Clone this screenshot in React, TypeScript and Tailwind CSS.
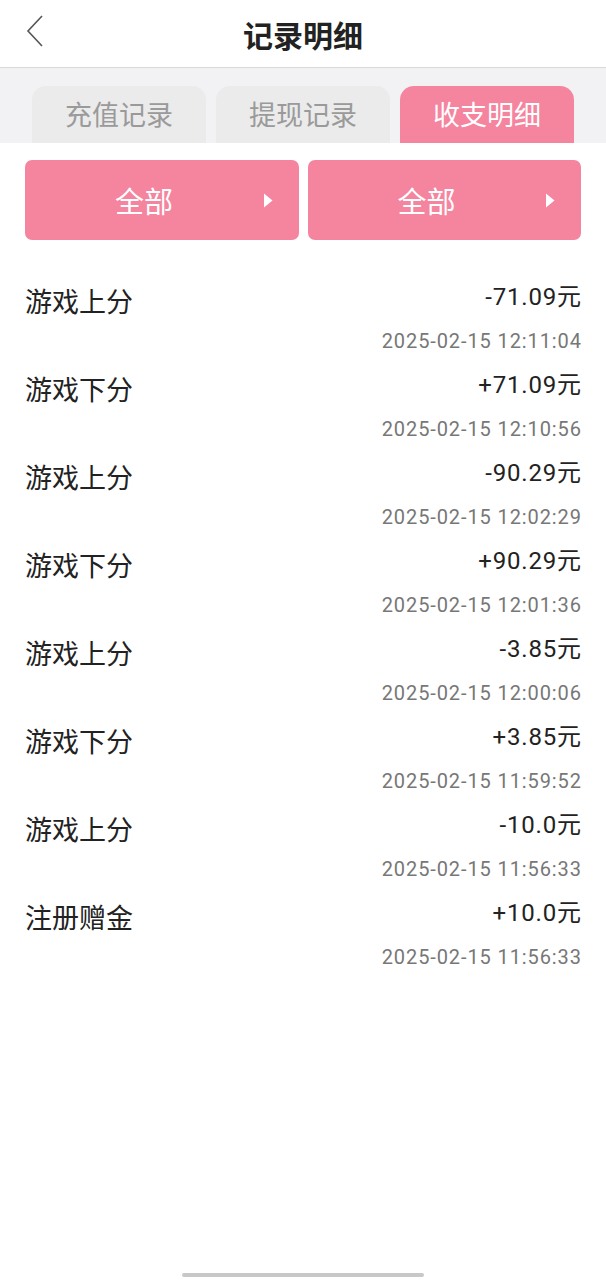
import React from "react";

const rows = [
  { t: "游戏上分", a: "-71.09元", d: "2025-02-15 12:11:04" },
  { t: "游戏下分", a: "+71.09元", d: "2025-02-15 12:10:56" },
  { t: "游戏上分", a: "-90.29元", d: "2025-02-15 12:02:29" },
  { t: "游戏下分", a: "+90.29元", d: "2025-02-15 12:01:36" },
  { t: "游戏上分", a: "-3.85元", d: "2025-02-15 12:00:06" },
  { t: "游戏下分", a: "+3.85元", d: "2025-02-15 11:59:52" },
  { t: "游戏上分", a: "-10.0元", d: "2025-02-15 11:56:33" },
  { t: "注册赠金", a: "+10.0元", d: "2025-02-15 11:56:33" },
];

const font = { fontFamily: '"Noto Sans CJK SC", "Noto Sans", sans-serif' };
const numFont = { fontFamily: 'Roboto, "Noto Sans CJK SC", sans-serif' };

function Tri() {
  return (
    <svg width="10" height="15" viewBox="0 0 10 15" className="shrink-0">
      <path d="M1 0.5 L9.5 7.5 L1 14.5 Z" fill="#fff" />
    </svg>
  );
}

export default function App() {
  return (
    <div className="min-h-[1280px] flex flex-col bg-white" style={font}>
      <div className="relative h-[68px] flex items-center justify-center border-b border-[#d9d9d9]">
        <svg width="20" height="34" viewBox="0 0 20 34" className="absolute left-[25px] top-[14px]">
          <path d="M17 2 L3 17 L17 32" fill="none" stroke="#555" strokeWidth="1.6" />
        </svg>
        <span className="text-[30px] font-bold text-[#222] leading-none">记录明细</span>
      </div>
      <div className="h-[75px] bg-[#f2f2f4] flex items-end gap-[10px] pl-[32px]">
        <div className="w-[174px] h-[57px] rounded-t-[14px] bg-[#ebebeb] flex items-center justify-center text-[27px] text-[#9a9a9a]">充值记录</div>
        <div className="w-[174px] h-[57px] rounded-t-[14px] bg-[#ebebeb] flex items-center justify-center text-[27px] text-[#9a9a9a]">提现记录</div>
        <div className="w-[174px] h-[57px] rounded-t-[14px] bg-[#f5849f] flex items-center justify-center text-[27px] text-white">收支明细</div>
      </div>
      <div className="flex gap-[9px] px-[25px] pt-[17px]">
        {[0, 1].map((i) => (
          <div key={i} className="flex-1 h-[80px] rounded-[7px] bg-[#f5849f] flex items-center pl-[90px] pr-[26px]">
            <span className="text-[29px] text-white leading-none">全部</span>
            <div className="flex-1" />
            <div className="flex mt-[1px]">
              <Tri />
            </div>
          </div>
        ))}
      </div>
      <div className="pt-[40px] px-[25px]">
        {rows.map((r, i) => (
          <div key={i} className="h-[88px] flex justify-between">
            <div className="pt-[4px] text-[27px] leading-[34px] text-[#222]">{r.t}</div>
            <div className="flex flex-col items-end">
              <div className="text-[24px] leading-[34px] text-[#222] tracking-[0.8px] mr-[-0.8px]" style={numFont}>{r.a}</div>
              <div className="mt-[12px] text-[20px] leading-[30px] text-[#777] tracking-[0.9px] mr-[-0.9px]" style={numFont}>{r.d}</div>
            </div>
          </div>
        ))}
      </div>
      <div className="flex-1" />
      <div className="flex justify-center pb-[3px]">
        <div className="w-[242px] h-[4px] rounded-full bg-[#c8c8c8]" />
      </div>
    </div>
  );
}
